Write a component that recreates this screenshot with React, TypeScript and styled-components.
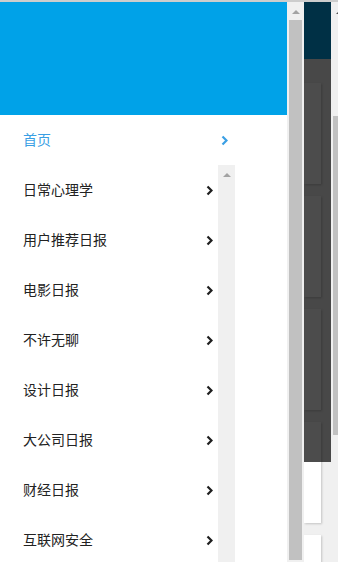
import React from "react";
import styled, { createGlobalStyle } from "styled-components";

const GlobalStyle = createGlobalStyle`
  html, body {
    margin: 0;
    padding: 0;
    background: #ffffff;
  }
  body {
    font-family: "Noto Sans CJK SC", "Noto Sans", sans-serif;
  }
`;

const Screen = styled.div`
  width: 338px;
  height: 562px;
  overflow: hidden;
  display: flex;
  flex-direction: column;
`;

const TopLine = styled.div`
  height: 2px;
  background: #cdcdcd;
  flex-shrink: 0;
`;

const Body = styled.div`
  flex: 1;
  display: flex;
  min-height: 0;
`;

const Drawer = styled.aside`
  width: 287px;
  flex-shrink: 0;
  display: flex;
  flex-direction: column;
  background: #fff;
`;

const Header = styled.header`
  height: 113px;
  background: #00a2e8;
  flex-shrink: 0;
`;

const ListArea = styled.div`
  width: 235px;
  flex: 1;
  display: flex;
  min-height: 0;
  overflow: hidden;
`;

const List = styled.ul`
  flex: 1;
  margin: 0;
  padding: 0;
  list-style: none;
`;

const Row = styled.li<{ $active?: boolean; $wide?: boolean }>`
  height: 50px;
  width: ${(p) => (p.$wide ? "235px" : "auto")};
  box-sizing: border-box;
  display: flex;
  align-items: center;
  justify-content: space-between;
  padding: 0 ${(p) => (p.$wide ? "7px" : "5px")} 2px 23px;
  font-size: 14px;
  line-height: 20px;
  color: ${(p) => (p.$active ? "#3a9fe4" : "#222222")};
  list-style: none;

  svg {
    margin-top: 2px;
  }
`;

const Track = styled.div<{ $w?: number }>`
  width: ${(p) => p.$w ?? 17}px;
  flex-shrink: 0;
  background: #f0f0f0;
  display: flex;
  flex-direction: column;
  align-items: center;
`;

const Arrow = styled.div<{ $dark?: boolean }>`
  width: 0;
  height: 0;
  margin-top: 8px;
  border-left: 4px solid transparent;
  border-right: 4px solid transparent;
  border-bottom: 4px solid ${(p) => (p.$dark ? "#505050" : "#a3a3a3")};
`;

const Thumb = styled.div<{ $top: number; $height: number }>`
  width: 13px;
  margin-top: ${(p) => p.$top}px;
  height: ${(p) => p.$height}px;
  background: #c1c1c1;
`;

const Page = styled.main`
  width: 27px;
  flex-shrink: 0;
  position: relative;
  background: #f0f0f0;
  display: flex;
  flex-direction: column;
  overflow: hidden;
`;

const PageBar = styled.div`
  height: 57px;
  background: #00a2e8;
  flex-shrink: 0;
`;

const Cards = styled.div`
  display: flex;
  flex-direction: column;
  gap: 12px;
  padding-top: 24px;
`;

const Card = styled.div`
  width: 17px;
  height: 101px;
  background: #fff;
  box-shadow: 1px 1px 2px rgba(0, 0, 0, 0.18);
`;

const Dim = styled.div`
  position: absolute;
  left: 0;
  top: 0;
  width: 100%;
  height: 460px;
  background: rgba(0, 0, 0, 0.7);
`;

const Chevron = ({ color }: { color: string }) => (
  <svg width="7" height="11" viewBox="0 0 7 11">
    <polyline
      points="1.5,1.5 5.5,5.5 1.5,9.5"
      fill="none"
      stroke={color}
      strokeWidth="2.2"
    />
  </svg>
);

const items = [
  "日常心理学",
  "用户推荐日报",
  "电影日报",
  "不许无聊",
  "设计日报",
  "大公司日报",
  "财经日报",
  "互联网安全",
];

export default function App() {
  return (
    <Screen>
      <GlobalStyle />
      <TopLine />
      <Body>
        <Drawer>
          <Header />
          <Row as="div" $active $wide>
            <span>首页</span>
            <Chevron color="#3a9fe4" />
          </Row>
          <ListArea>
            <List>
              {items.map((name) => (
                <Row key={name}>
                  <span>{name}</span>
                  <Chevron color="#1e1e1e" />
                </Row>
              ))}
            </List>
            <Track>
              <Arrow />
            </Track>
          </ListArea>
        </Drawer>
        <Track>
          <Arrow />
          <Thumb $top={6} $height={540} />
        </Track>
        <Page>
          <PageBar />
          <Cards>
            <Card />
            <Card />
            <Card />
            <Card />
            <Card />
          </Cards>
          <Dim />
        </Page>
        <Track>
          <Arrow $dark />
          <Thumb $top={102} $height={319} />
        </Track>
      </Body>
    </Screen>
  );
}
